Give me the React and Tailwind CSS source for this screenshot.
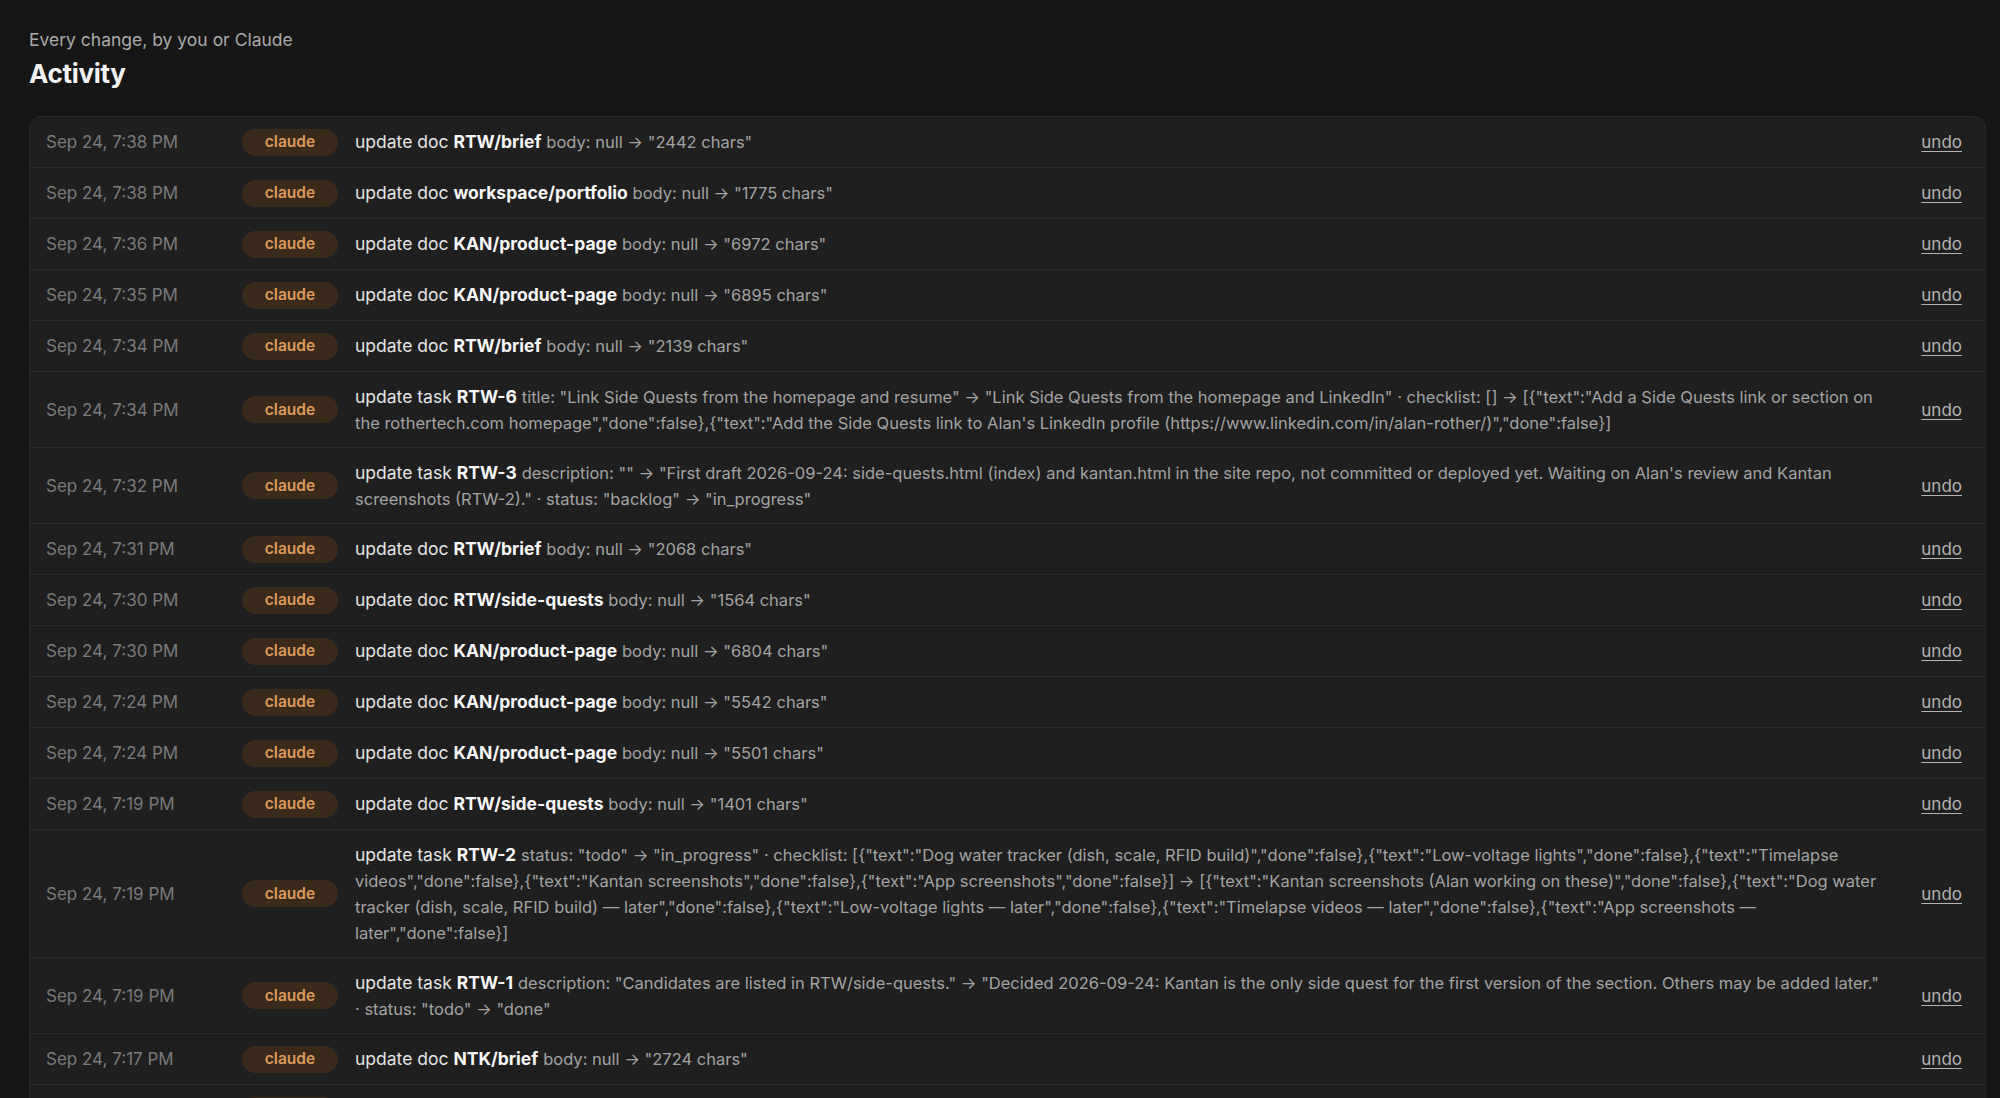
const ROWS = [
  { time: 'Sep 24, 7:38 PM', kind: 'doc', target: 'RTW/brief', detail: 'body: null → "2442 chars"' },
  { time: 'Sep 24, 7:38 PM', kind: 'doc', target: 'workspace/portfolio', detail: 'body: null → "1775 chars"' },
  { time: 'Sep 24, 7:36 PM', kind: 'doc', target: 'KAN/product-page', detail: 'body: null → "6972 chars"' },
  { time: 'Sep 24, 7:35 PM', kind: 'doc', target: 'KAN/product-page', detail: 'body: null → "6895 chars"' },
  { time: 'Sep 24, 7:34 PM', kind: 'doc', target: 'RTW/brief', detail: 'body: null → "2139 chars"' },
  {
    time: 'Sep 24, 7:34 PM', kind: 'task', target: 'RTW-6',
    detail: 'title: "Link Side Quests from the homepage and resume" → "Link Side Quests from the homepage and LinkedIn" · checklist: [] → [{"text":"Add a Side Quests link or section on the rothertech.com homepage","done":false},{"text":"Add the Side Quests link to Alan\'s LinkedIn profile (https://www.linkedin.com/in/alan-rother/)","done":false}]',
  },
  {
    time: 'Sep 24, 7:32 PM', kind: 'task', target: 'RTW-3',
    detail: 'description: "" → "First draft 2026-09-24: side-quests.html (index) and kantan.html in the site repo, not committed or deployed yet. Waiting on Alan\'s review and Kantan screenshots (RTW-2)." · status: "backlog" → "in_progress"',
  },
  { time: 'Sep 24, 7:31 PM', kind: 'doc', target: 'RTW/brief', detail: 'body: null → "2068 chars"' },
  { time: 'Sep 24, 7:30 PM', kind: 'doc', target: 'RTW/side-quests', detail: 'body: null → "1564 chars"' },
  { time: 'Sep 24, 7:30 PM', kind: 'doc', target: 'KAN/product-page', detail: 'body: null → "6804 chars"' },
  { time: 'Sep 24, 7:24 PM', kind: 'doc', target: 'KAN/product-page', detail: 'body: null → "5542 chars"' },
  { time: 'Sep 24, 7:24 PM', kind: 'doc', target: 'KAN/product-page', detail: 'body: null → "5501 chars"' },
  { time: 'Sep 24, 7:19 PM', kind: 'doc', target: 'RTW/side-quests', detail: 'body: null → "1401 chars"' },
  {
    time: 'Sep 24, 7:19 PM', kind: 'task', target: 'RTW-2',
    detail: 'status: "todo" → "in_progress" · checklist: [{"text":"Dog water tracker (dish, scale, RFID build)","done":false},{"text":"Low-voltage lights","done":false},{"text":"Timelapse videos","done":false},{"text":"Kantan screenshots","done":false},{"text":"App screenshots","done":false}] → [{"text":"Kantan screenshots (Alan working on these)","done":false},{"text":"Dog water tracker (dish, scale, RFID build) — later","done":false},{"text":"Low-voltage lights — later","done":false},{"text":"Timelapse videos — later","done":false},{"text":"App screenshots — later","done":false}]',
  },
  {
    time: 'Sep 24, 7:19 PM', kind: 'task', target: 'RTW-1',
    detail: 'description: "Candidates are listed in RTW/side-quests." → "Decided 2026-09-24: Kantan is the only side quest for the first version of the section. Others may be added later." · status: "todo" → "done"',
  },
  { time: 'Sep 24, 7:17 PM', kind: 'doc', target: 'NTK/brief', detail: 'body: null → "2724 chars"' },
  { time: 'Sep 24, 7:15 PM', kind: 'doc', target: 'NTK/brief', detail: 'body: null → "2610 chars"' },
  { time: 'Sep 24, 7:12 PM', kind: 'doc', target: 'RTW/brief', detail: 'body: null → "1988 chars"' },
]

export default function App() {
  return (
    <div className="min-h-screen bg-[#161616] pl-[29px] pr-[14px] pt-[28px] pb-10 font-['Inter',sans-serif]">
      <p className="text-[17.5px] leading-6 text-[#a9a9a9]">Every change, by you or Claude</p>
      <h1 className="mt-[5px] text-[26px] leading-[34px] font-bold text-[#f2f2f2] tracking-[-0.3px]">Activity</h1>

      {/* Activity list */}
      <div className="mt-[25px] rounded-xl border border-[#2a2a2a] bg-[#1f1f1f] overflow-hidden">
        {ROWS.map((row, i) => (
          <div key={i}
            className="flex items-center pl-4 pr-[23px] py-[11.5px] border-b border-[#2b2b2b] last:border-b-0">
            <div className="w-[196px] shrink-0 text-[17px] leading-[26px] text-[#7a7a7a]">{row.time}</div>
            <div className="w-[113px] shrink-0">
              <span className="inline-flex items-center justify-center w-[96px] h-[27px] rounded-full bg-[#3a2a1c] text-[15.5px] leading-none font-semibold text-[#de9a5a]">
                claude
              </span>
            </div>
            <p className="flex-1 min-w-0 leading-[26px] text-[17.5px] text-[#e4e4e4]">
              update {row.kind} <span className="font-bold text-[#f7f7f7]">{row.target}</span>{' '}
              <span className="text-[16.5px] leading-none text-[#a3a3a3]">{row.detail}</span>
            </p>
            <a href="#" className="ml-10 shrink-0 text-[17px] leading-[26px] text-[#b3b3b3] underline underline-offset-[3px]">undo</a>
          </div>
        ))}
      </div>
    </div>
  )
}
